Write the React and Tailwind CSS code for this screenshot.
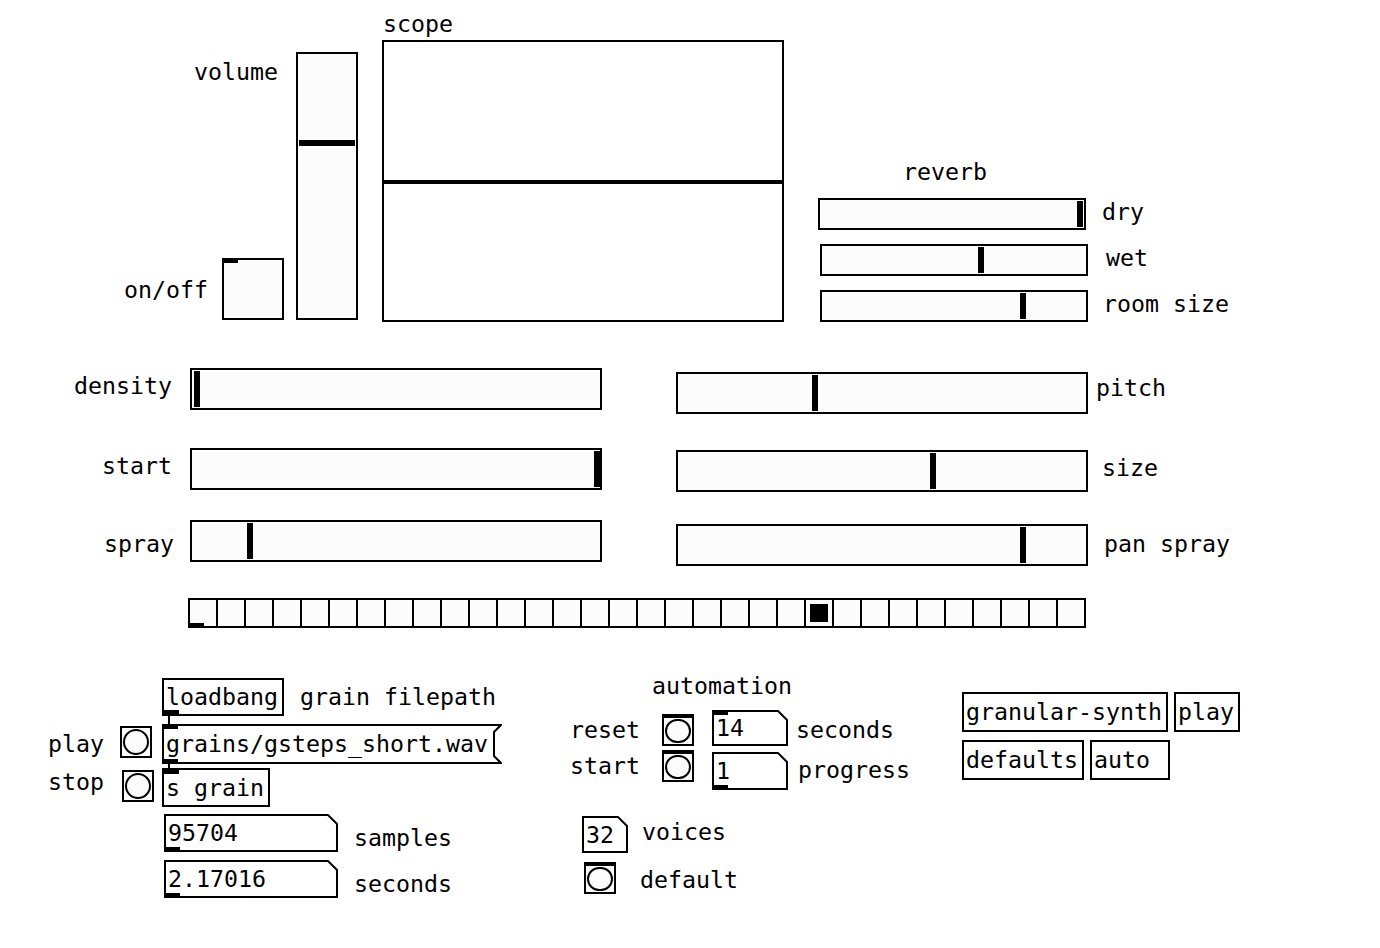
import React from 'react';

// small black inlet/outlet marks, like pd draws them
const Inlet = () => <div className="absolute left-0 top-0 w-[15px] h-[4px] bg-black" />;
const Outlet = () => <div className="absolute left-0 bottom-0 w-[15px] h-[4px] bg-black" />;

const Label = ({ className = '', children }) => (
  <div className={`whitespace-pre leading-[28px] ${className}`}>{children}</div>
);

const HSlider = ({ className, knob }) => (
  <div className={`relative shrink-0 border-2 border-black bg-[#fcfcfc] ${className}`}>
    <div className="absolute top-[1px] bottom-[1px] w-[6px] bg-black" style={{ left: knob }} />
  </div>
);

const Bang = ({ className = '', thickTop }) => (
  <div
    className={`relative shrink-0 w-[32px] h-[32px] border-2 border-black bg-[#fcfcfc] ${
      thickTop ? 'border-t-4' : ''
    } ${className}`}
  >
    <div className="absolute inset-[1px] rounded-full border-2 border-black" />
  </div>
);

const ObjBox = ({ className, children, inlet, outlet }) => (
  <div className={`relative shrink-0 flex items-center border-2 border-black bg-white pl-[2px] leading-[28px] whitespace-pre ${className}`}>
    {inlet && <Inlet />}
    {outlet && <Outlet />}
    <span className="relative">{children}</span>
  </div>
);

// number box: rectangle with the top right corner cut off
const NumBox = ({ className, w, h, children, inlet, outlet }) => {
  const c = 10;
  const d = `M1 1 L${w - c} 1 L${w - 1} ${c} L${w - 1} ${h - 1} L1 ${h - 1} Z`;
  return (
    <div className={`relative shrink-0 flex items-center pl-[4px] leading-[28px] whitespace-pre ${className}`}>
      <svg className="absolute left-0 top-0" width={w} height={h}>
        <path d={d} fill="white" stroke="black" strokeWidth="2" />
      </svg>
      {inlet && <div className="absolute left-[1px] top-[1px] w-[15px] h-[4px] bg-black" />}
      {outlet && <div className="absolute left-[1px] bottom-[1px] w-[15px] h-[4px] bg-black" />}
      <span className="relative">{children}</span>
    </div>
  );
};

// message box with the flag notch on the right
const MsgBox = ({ className, w, h, children }) => {
  const n = 7;
  const d = `M1 1 L${w - 1} 1 L${w - 1 - n} ${n + 1} L${w - 1 - n} ${h - 1 - n} L${w - 1} ${h - 1} L1 ${h - 1} Z`;
  return (
    <div className={`relative shrink-0 flex items-center pl-[4px] leading-[28px] whitespace-pre ${className}`}>
      <svg className="absolute left-0 top-0" width={w} height={h}>
        <path d={d} fill="white" stroke="black" strokeWidth="2" />
      </svg>
      <div className="absolute left-[1px] top-[1px] w-[15px] h-[4px] bg-black" />
      <div className="absolute left-[1px] bottom-[1px] w-[15px] h-[4px] bg-black" />
      <span className="relative">{children}</span>
    </div>
  );
};

const Cord = ({ className }) => <div className={`ml-[6px] w-[2px] bg-black ${className}`} />;

const Radio = ({ className, count, value }) => (
  <div className={`absolute flex h-[30px] border-y-2 border-l-2 border-black bg-[#fcfcfc] ${className}`}>
    {Array.from({ length: count }).map((_, i) => (
      <div key={i} className="relative w-[28px] h-full border-r-2 border-black flex items-center justify-center">
        {i === value && <div className="w-[18px] h-[18px] bg-black" />}
        {i === 0 && <div className="absolute left-0 bottom-0 w-[14px] h-[3px] bg-black" />}
      </div>
    ))}
  </div>
);

export default function App() {
  return (
    <div className="relative w-[1380px] h-[948px] overflow-hidden bg-white text-black font-['DejaVu_Sans_Mono','Liberation_Mono',monospace] text-[23.25px]">
      {/* top: volume, on/off, scope */}
      <Label className="absolute left-[194px] top-[58px]">volume</Label>
      <Label className="absolute left-[383px] top-[10px]">scope</Label>

      <div className="absolute left-[124px] top-[40px] flex items-end">
        <Label className="mb-[18px]">on/off</Label>
        <div className="relative ml-[14px] w-[62px] h-[62px] mb-[2px] border-2 border-black bg-[#fcfcfc]">
          <div className="absolute left-0 top-0 w-[14px] h-[3px] bg-black" />
        </div>
        <div className="relative ml-[12px] w-[62px] h-[268px] mb-[2px] border-2 border-black bg-[#fcfcfc]">
          <div className="absolute left-[1px] right-[1px] top-[86px] h-[6px] bg-black" />
        </div>
        <div className="ml-[24px] w-[402px] h-[282px] border-2 border-black bg-white flex flex-col">
          <div className="h-[138px]" />
          <div className="h-[4px] bg-black" />
        </div>
      </div>

      {/* reverb */}
      <div className="absolute left-[818px] top-[158px] flex flex-col">
        <Label className="ml-[85px]">reverb</Label>
        <div className="mt-[12px] flex items-start">
          <HSlider className="w-[268px] h-[32px]" knob={257} />
          <Label className="ml-[16px]">dry</Label>
        </div>
        <div className="mt-[14px] ml-[2px] flex items-start">
          <HSlider className="w-[268px] h-[32px]" knob={156} />
          <Label className="ml-[18px]">wet</Label>
        </div>
        <div className="mt-[14px] ml-[2px] flex items-start">
          <HSlider className="w-[268px] h-[32px]" knob={198} />
          <Label className="ml-[15px]">room size</Label>
        </div>
      </div>

      {/* grain parameters, left column */}
      <div className="absolute left-[74px] top-[368px] flex flex-col">
        <div className="flex items-start">
          <Label className="mt-[4px] w-[98px] text-right">density</Label>
          <HSlider className="ml-[18px] w-[412px] h-[42px]" knob={2} />
        </div>
        <div className="mt-[38px] flex items-start">
          <Label className="mt-[4px] w-[98px] text-right">start</Label>
          <HSlider className="ml-[18px] w-[412px] h-[42px]" knob={402} />
        </div>
        <div className="mt-[30px] flex items-start">
          <Label className="mt-[10px] w-[100px] text-right">spray</Label>
          <HSlider className="ml-[16px] w-[412px] h-[42px]" knob={55} />
        </div>
      </div>

      {/* grain parameters, right column */}
      <div className="absolute left-[676px] top-[372px] flex flex-col">
        <div className="flex items-start">
          <HSlider className="w-[412px] h-[42px]" knob={134} />
          <Label className="mt-[2px] ml-[8px]">pitch</Label>
        </div>
        <div className="mt-[36px] flex items-start">
          <HSlider className="w-[412px] h-[42px]" knob={252} />
          <Label className="mt-[4px] ml-[14px]">size</Label>
        </div>
        <div className="mt-[32px] flex items-start">
          <HSlider className="w-[412px] h-[42px]" knob={342} />
          <Label className="mt-[6px] ml-[16px]">pan spray</Label>
        </div>
      </div>

      <Radio className="left-[188px] top-[598px]" count={32} value={22} />

      {/* play / stop */}
      <div className="absolute left-[48px] top-[726px] flex flex-col">
        <div className="flex items-start">
          <Label className="mt-[4px] w-[72px]">play</Label>
          <Bang />
        </div>
        <div className="mt-[12px] flex items-start">
          <Label className="-mt-[2px] w-[74px]">stop</Label>
          <Bang />
        </div>
      </div>

      {/* file loading */}
      <div className="absolute left-[162px] top-[678px] flex flex-col items-start">
        <div className="flex items-center">
          <ObjBox className="w-[122px] h-[38px]" outlet>loadbang</ObjBox>
          <Label className="ml-[16px]">grain filepath</Label>
        </div>
        <Cord className="h-[8px]" />
        <MsgBox className="w-[340px] h-[40px]" w={340} h={40}>grains/gsteps_short.wav</MsgBox>
        <Cord className="h-[4px]" />
        <ObjBox className="w-[108px] h-[39px]" inlet>s grain</ObjBox>
        <div className="mt-[7px] ml-[2px] flex items-start">
          <NumBox className="w-[174px] h-[38px]" w={174} h={38} outlet>95704</NumBox>
          <Label className="ml-[16px] mt-[10px]">samples</Label>
        </div>
        <div className="mt-[8px] ml-[2px] flex items-start">
          <NumBox className="w-[174px] h-[38px]" w={174} h={38} outlet>2.17016</NumBox>
          <Label className="ml-[16px] mt-[10px]">seconds</Label>
        </div>
      </div>

      {/* automation */}
      <div className="absolute left-[570px] top-[672px] flex flex-col">
        <Label className="ml-[82px]">automation</Label>
        <div className="mt-[10px] flex items-start">
          <div className="mt-[4px] flex flex-col gap-[4px]">
            <div className="flex items-start gap-[22px]">
              <Label className="mt-[2px]">reset</Label>
              <Bang thickTop />
            </div>
            <div className="flex items-start gap-[22px]">
              <Label className="mt-[2px]">start</Label>
              <Bang thickTop />
            </div>
          </div>
          <div className="ml-[18px] flex flex-col gap-[6px]">
            <div className="flex items-start gap-[8px]">
              <NumBox className="w-[76px] h-[36px]" w={76} h={36} inlet>14</NumBox>
              <Label className="mt-[6px]">seconds</Label>
            </div>
            <div className="flex items-start gap-[10px]">
              <NumBox className="w-[76px] h-[38px]" w={76} h={38} outlet>1</NumBox>
              <Label className="mt-[4px]">progress</Label>
            </div>
          </div>
        </div>
      </div>

      {/* voices */}
      <div className="absolute left-[582px] top-[816px] flex flex-col">
        <div className="flex items-start gap-[14px]">
          <NumBox className="w-[46px] h-[37px]" w={46} h={37}>32</NumBox>
          <Label className="mt-[2px]">voices</Label>
        </div>
        <div className="mt-[9px] ml-[2px] flex items-start gap-[24px]">
          <Bang thickTop />
          <Label className="mt-[4px]">default</Label>
        </div>
      </div>

      {/* abstractions */}
      <div className="absolute left-[962px] top-[692px] flex flex-col gap-[8px]">
        <div className="flex gap-[6px]">
          <ObjBox className="w-[206px] h-[40px]">granular-synth</ObjBox>
          <ObjBox className="w-[66px] h-[40px]">play</ObjBox>
        </div>
        <div className="flex gap-[6px]">
          <ObjBox className="w-[122px] h-[40px]">defaults</ObjBox>
          <ObjBox className="w-[80px] h-[40px]">auto</ObjBox>
        </div>
      </div>
    </div>
  );
}
